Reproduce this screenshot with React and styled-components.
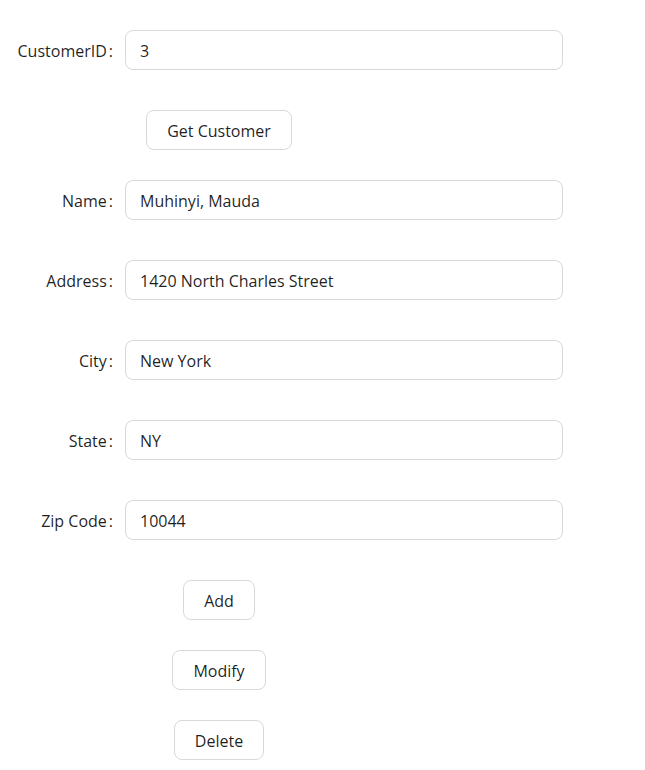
import React, { useState } from "react";
import styled, { createGlobalStyle } from "styled-components";

const GlobalStyle = createGlobalStyle`
  body {
    margin: 0;
    background: #ffffff;
    font-family: "Open Sans", "Noto Sans", sans-serif;
  }
`;

const initial = {
  name: "Muhinyi, Mauda",
  address: "1420 North Charles Street",
  city: "New York",
  state: "NY",
  zip: "10044",
};

const App = () => {
  const [customerId, setCustomerId] = useState("3");
  const [customer, setCustomer] = useState(initial);

  const change = (key) => (e) =>
    setCustomer({ ...customer, [key]: e.target.value });

  const fields = [
    { key: "name", label: "Name" },
    { key: "address", label: "Address" },
    { key: "city", label: "City" },
    { key: "state", label: "State" },
    { key: "zip", label: "Zip Code" },
  ];

  return (
    <>
      <GlobalStyle />
      <S.Page>
        <S.Row>
          <S.Label>CustomerID</S.Label>
          <S.Input
            value={customerId}
            onChange={(e) => setCustomerId(e.target.value)}
          />
        </S.Row>
        <S.ButtonRow $top={40} $bottom={30}>
          <S.Button>Get Customer</S.Button>
        </S.ButtonRow>
        {fields.map((f, i) => (
          <S.Row key={f.key} $bottom={i < fields.length - 1 ? 40 : 0}>
            <S.Label>{f.label}</S.Label>
            <S.Input value={customer[f.key]} onChange={change(f.key)} />
          </S.Row>
        ))}
        <S.ButtonRow $top={40} $bottom={30}>
          <S.Button>Add</S.Button>
        </S.ButtonRow>
        <S.ButtonRow $bottom={30}>
          <S.Button>Modify</S.Button>
        </S.ButtonRow>
        <S.ButtonRow>
          <S.Button>Delete</S.Button>
        </S.ButtonRow>
      </S.Page>
    </>
  );
};

const S = {
  Page: styled.div`
    display: flex;
    flex-direction: column;
    padding-top: 30px;
    color: rgba(0, 0, 0, 0.88);
    font-size: 16px;
  `,
  Row: styled.div`
    display: flex;
    align-items: flex-start;
    height: 40px;
    margin-bottom: ${(p) => p.$bottom || 0}px;
  `,
  Label: styled.label`
    width: 117px;
    height: 40px;
    flex-shrink: 0;
    text-align: right;
    line-height: 42px;
    white-space: nowrap;
    &::after {
      content: ":";
      margin-left: 2px;
      margin-right: 4px;
    }
  `,
  Input: styled.input`
    box-sizing: border-box;
    width: 438px;
    height: 40px;
    margin-left: 8px;
    padding: 1px 15px 0 14px;
    border: 1px solid #d9d9d9;
    border-radius: 8px;
    font-family: inherit;
    font-size: 16px;
    color: rgba(0, 0, 0, 0.88);
    outline: none;
  `,
  ButtonRow: styled.div`
    display: flex;
    justify-content: center;
    width: 438px;
    height: 40px;
    margin-top: ${(p) => p.$top || 0}px;
    margin-bottom: ${(p) => p.$bottom || 0}px;
  `,
  Button: styled.button`
    box-sizing: border-box;
    height: 40px;
    padding: 1px 20px 0;
    background: #ffffff;
    border: 1px solid #d9d9d9;
    border-radius: 8px;
    font-family: inherit;
    font-size: 16px;
    color: rgba(0, 0, 0, 0.88);
    cursor: pointer;
  `,
};

export default App;
